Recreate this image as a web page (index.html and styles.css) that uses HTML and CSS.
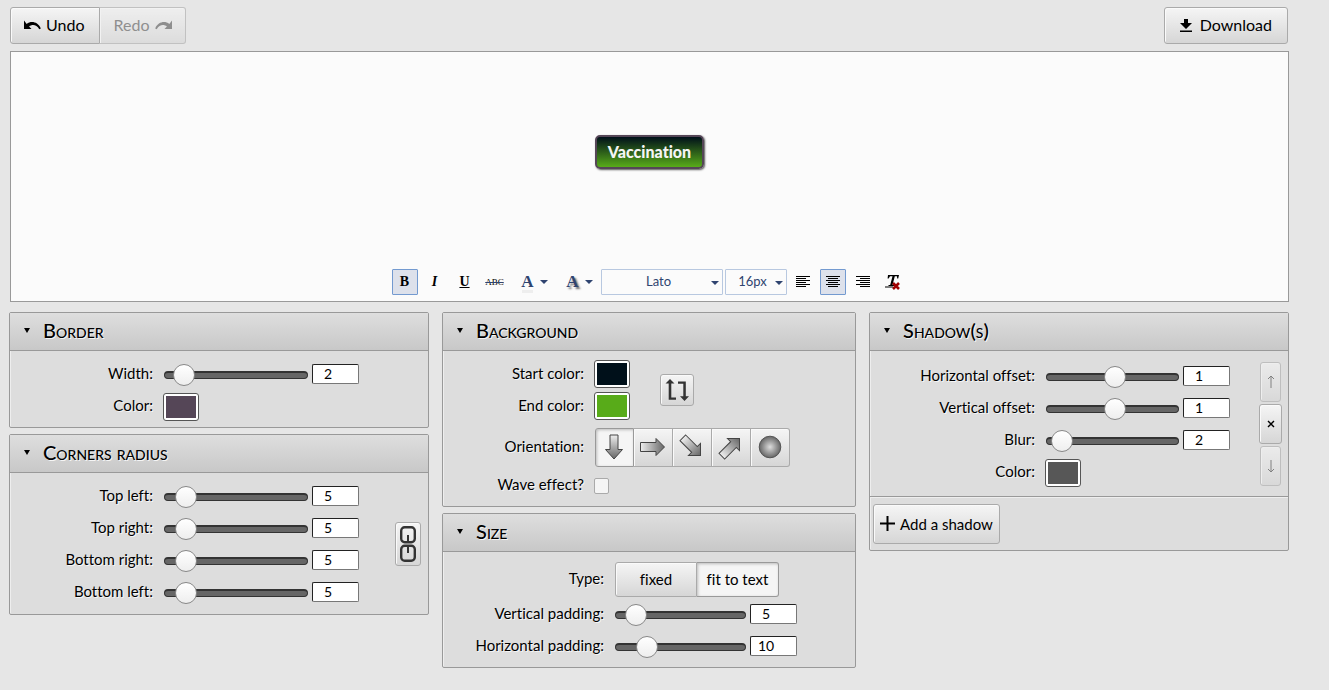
FILE: index.html
```html
<!DOCTYPE html>
<html lang="en">
<head>
<meta charset="utf-8">
<title>Button editor</title>
<link rel="stylesheet" href="styles.css">
</head>
<body>
<header class="topbar">
  <div class="segmented">
    <button class="btn" type="button"><svg width="17" height="12" viewBox="0 0 17 12"><path d="M0 1.500v8.500h7.500L5.100 7.600C8 5.200 12.500 5.400 15.300 10.200l1.500-.8C13.800 2.500 7 1.500 2.700 4.900z" fill="#000"/></svg>Undo</button>
    <button class="btn" type="button" disabled>Redo<svg width="17" height="12" viewBox="0 0 17 12"><path d="M17 1.500v8.500H9.500l2.400-2.400C9 5.200 4.500 5.400 1.700 10.200L.2 9.400C3.200 2.500 10 1.500 14.300 4.900z" fill="#555"/></svg></button>
  </div>
  <button class="btn" type="button"><svg width="12" height="15" viewBox="0 0 12 15"><path d="M4 1h4v4h4L6 11 0 5h4zM0 12.500h12V14H0z" fill="#000"/></svg>Download</button>
</header>

<main>
  <section class="preview">
    <div class="stage"><a class="sample" href="#">Vaccination</a></div>
    <div class="editor">
      <div class="tools">
        <button class="tool tool-on" type="button" aria-label="Bold"><b>B</b></button>
        <button class="tool" type="button" aria-label="Italic"><i>I</i></button>
        <button class="tool" type="button" aria-label="Underline"><u>U</u></button>
        <button class="tool" type="button" aria-label="Strikethrough"><s>ABC</s></button>
      </div>
      <div class="drops">
        <button class="tool drop" type="button" aria-label="Text color"><span class="letter plain">A</span><span class="caret"></span></button>
        <button class="tool drop" type="button" aria-label="Text shadow"><span class="letter glow">A</span><span class="caret"></span></button>
        <div class="pickers">
          <div class="picker font"><select aria-label="Font"><option>Lato</option></select><span class="caret"></span></div>
          <div class="picker size"><select aria-label="Font size"><option>16px</option></select><span class="caret"></span></div>
        </div>
      </div>
      <div class="tools">
        <button class="tool" type="button" aria-label="Align left"><svg width="14" height="12" viewBox="0 0 14 12"><path d="M0 .5h14M0 2.500h10M0 4.500h14M0 6.500h10M0 8.500h14M0 10.500h10" stroke="#000"/></svg></button>
        <button class="tool tool-on" type="button" aria-label="Align center"><svg width="14" height="12" viewBox="0 0 14 12"><path d="M0 .5h14M2 2.500h10M0 4.500h14M2 6.500h10M0 8.500h14M2 10.500h10" stroke="#000"/></svg></button>
        <button class="tool" type="button" aria-label="Align right"><svg width="14" height="12" viewBox="0 0 14 12"><path d="M0 .5h14M4 2.500h10M0 4.500h14M4 6.500h10M0 8.500h14M4 10.500h10" stroke="#000"/></svg></button>
        <button class="tool" type="button" aria-label="Remove formatting"><svg width="15" height="16" viewBox="0 0 15 16"><path d="M3 1h11l-.8 3.500h-1L12 2.300H9.800L7.500 11h1.700v1H3.500v-1h1.700L7.500 2.300H5L3.600 4.500h-1zM0 12.500h8v1H0z" fill="#000"/><path d="M8 9l6 6M14 9l-6 6" stroke="#a00000" stroke-width="2.600"/></svg></button>
      </div>
    </div>
  </section>

  <div class="columns">
    <div class="column">
      <section class="panel">
        <h2>Border</h2>
        <div class="body border-body">
          <div class="row"><label for="bw">Width:</label><input id="bw" type="range" min="0" max="29" value="2"><input class="num" type="text" value="2" aria-label="Border width"></div>
          <div class="row"><label for="bc">Color:</label><input id="bc" type="color" value="#554657"></div>
        </div>
      </section>
      <section class="panel">
        <h2>Corners radius</h2>
        <div class="body corner-body">
          <div class="rows">
            <div class="row"><label for="tl">Top left:</label><input id="tl" type="range" min="0" max="60" value="5"><input class="num" type="text" value="5" aria-label="Top left radius"></div>
            <div class="row"><label for="tr">Top right:</label><input id="tr" type="range" min="0" max="60" value="5"><input class="num" type="text" value="5" aria-label="Top right radius"></div>
            <div class="row"><label for="br">Bottom right:</label><input id="br" type="range" min="0" max="60" value="5"><input class="num" type="text" value="5" aria-label="Bottom right radius"></div>
            <div class="row"><label for="bl">Bottom left:</label><input id="bl" type="range" min="0" max="60" value="5"><input class="num" type="text" value="5" aria-label="Bottom left radius"></div>
          </div>
          <button class="btn link" type="button" aria-label="Link corners"><svg width="16" height="36" viewBox="0 0 16 36"><g fill="none" stroke="#333" stroke-width="2.400"><rect x="1.200" y="1.200" width="13.600" height="15" rx="3.500"/><rect x="1.200" y="19.800" width="13.600" height="15" rx="3.500"/><path d="M8 9v7M8 20v7" stroke-width="2"/></g></svg></button>
        </div>
      </section>
    </div>

    <div class="column">
      <section class="panel">
        <h2>Background</h2>
        <div class="body bg-body">
          <div class="swap-group">
            <div>
              <div class="row"><label for="sc">Start color:</label><input id="sc" type="color" value="#00101a"></div>
              <div class="row"><label for="ec">End color:</label><input id="ec" type="color" value="#58ab19"></div>
            </div>
            <button class="btn swap" type="button" aria-label="Swap colors"><svg width="24" height="24" viewBox="0 0 24 24"><path d="M5 1l4.500 4.500H6.300V19.500H11v2.300H3.700V5.500H.5zM13 3.500h7.800v14.700H24L19.500 23 15 18.200h3.300V5.800H13z" fill="#333"/></svg></button>
          </div>
          <div class="row tall">
            <span class="label">Orientation:</span>
            <div class="segmented orient">
              <button class="btn btn-on" type="button" aria-label="Top to bottom"><svg width="28" height="28" viewBox="0 0 28 28"><defs><linearGradient id="g"><stop offset="0" stop-color="#eee"/><stop offset="1" stop-color="#666"/></linearGradient><radialGradient id="r"><stop offset="0" stop-color="#ddd"/><stop offset="1" stop-color="#666"/></radialGradient></defs><path transform="rotate(90 14 14)" d="M2 10h14.500V5.500L26 14l-9.500 8.500V18H2z" fill="url(#g)" stroke="#444"/></svg></button>
              <button class="btn" type="button" aria-label="Left to right"><svg width="28" height="28" viewBox="0 0 28 28"><path d="M1.500 9.500h15.500v-4L25.500 14l-8.500 8.500v-4H1.500z" fill="url(#g)" stroke="#444"/></svg></button>
              <button class="btn" type="button" aria-label="Diagonal down"><svg width="28" height="28" viewBox="0 0 28 28"><path transform="rotate(45 14 14)" d="M1 10h16.500V5.500L26 14l-8.500 8.500V18H1z" fill="url(#g)" stroke="#444"/></svg></button>
              <button class="btn" type="button" aria-label="Diagonal up"><svg width="28" height="28" viewBox="0 0 28 28"><path transform="rotate(-45 14 14)" d="M1 10h16.500V5.500L26 14l-8.500 8.500V18H1z" fill="url(#g)" stroke="#444"/></svg></button>
              <button class="btn" type="button" aria-label="Radial"><svg width="28" height="28" viewBox="0 0 28 28"><circle cx="14" cy="14" r="10.800" fill="url(#r)" stroke="#555"/></svg></button>
            </div>
          </div>
          <div class="row"><label for="wave">Wave effect?</label><input id="wave" type="checkbox"></div>
        </div>
      </section>
      <section class="panel">
        <h2>Size</h2>
        <div class="body size-body">
          <div class="row type-row">
            <span class="label">Type:</span>
            <div class="segmented types">
              <button class="btn" type="button">fixed</button>
              <button class="btn btn-on" type="button">fit to text</button>
            </div>
          </div>
          <div class="row"><label for="vp">Vertical padding:</label><input id="vp" type="range" min="0" max="57" value="5"><input class="num" type="text" value="5" aria-label="Vertical padding value"></div>
          <div class="row"><label for="hp">Horizontal padding:</label><input id="hp" type="range" min="0" max="54" value="10"><input class="num" type="text" value="10" aria-label="Horizontal padding value"></div>
        </div>
      </section>
    </div>

    <div class="column">
      <section class="panel">
        <h2>Shadow(s)</h2>
        <div class="body shadow-body">
          <div class="rows">
            <div class="row"><label for="ho">Horizontal offset:</label><input id="ho" type="range" min="-20" max="20" value="1"><input class="num" type="text" value="1" aria-label="Horizontal offset value"></div>
            <div class="row"><label for="vo">Vertical offset:</label><input id="vo" type="range" min="-20" max="20" value="1"><input class="num" type="text" value="1" aria-label="Vertical offset value"></div>
            <div class="row"><label for="sb">Blur:</label><input id="sb" type="range" min="0" max="60" value="2"><input class="num" type="text" value="2" aria-label="Blur value"></div>
            <div class="row"><label for="shc">Color:</label><input id="shc" type="color" value="#575757"></div>
          </div>
          <div class="order">
            <button class="btn" type="button" aria-label="Move up" disabled><svg width="8" height="14" viewBox="0 0 8 14"><path d="M4 1v12M1 4l3-3 3 3" fill="none" stroke="#444"/></svg></button>
            <button class="btn" type="button" aria-label="Remove shadow"><svg width="8" height="8" viewBox="0 0 8 8"><path d="M1 1l6 6M7 1L1 7" stroke="#000" stroke-width="1.400"/></svg></button>
            <button class="btn" type="button" aria-label="Move down" disabled><svg width="8" height="14" viewBox="0 0 8 14"><path d="M4 1v12M1 10l3 3 3-3" fill="none" stroke="#444"/></svg></button>
          </div>
        </div>
        <div class="add">
          <button class="btn" type="button"><svg width="15" height="15" viewBox="0 0 15 15"><path d="M7.500 0v15M0 7.500h15" stroke="#000" stroke-width="2"/></svg>Add a shadow</button>
        </div>
      </section>
    </div>
  </div>
</main>
</body>
</html>
```
FILE: styles.css
```css
* { box-sizing: border-box; }

body {
  margin: 0;
  padding: 7px 40px 20px 9px;
  background: #e6e6e6;
  color: #000;
  font: 15px/20px Lato, sans-serif;
  font-variant-ligatures: none;
}

button, input, select { margin: 0; font: inherit; color: inherit; }
button { font-variant-ligatures: none; }
svg { display: block; flex: none; }

.btn {
  display: flex;
  align-items: center;
  justify-content: center;
  gap: 5px;
  padding: 0 14px;
  border: 1px solid #aaa;
  border-radius: 3px;
  background: linear-gradient(#f5f5f5, #d6d6d6);
  box-shadow: inset 1px 1px 0 #fafafa;
}
.btn:disabled { opacity: .6; color: #555; }
.btn-on {
  border-color: #999;
  background: #f5f5f5;
  box-shadow: inset 1px 1px 3px #bbb;
}

.segmented { display: flex; }
.segmented .btn { border-radius: 0; }
.segmented .btn + .btn { border-left-width: 0; }
.segmented .btn:first-child { border-radius: 3px 0 0 3px; }
.segmented .btn:last-child { border-radius: 0 3px 3px 0; }

.topbar {
  display: flex;
  justify-content: space-between;
  padding: 0 1px;
}
.topbar .btn { gap: 8px; height: 37px; padding: 0 15px 1px; font-size: 16px; }
.topbar .segmented .btn { gap: 5px; padding: 0 14px 1px 13px; }
.topbar .segmented .btn:last-child { gap: 6px; padding: 0 13px 1px 14px; }

.preview {
  display: flex;
  flex-direction: column;
  margin: 7px 0 10px 1px;
  border: 1px solid #999;
  background: #fbfbfb;
}
.stage {
  display: flex;
  justify-content: center;
  padding: 83px 0 99px;
}
.sample {
  padding: 5px 11px;
  border: 2px solid #554657;
  border-radius: 5px;
  background: linear-gradient(#00101a, #58ab19);
  box-shadow: 1px 1px 2px #575757;
  color: #f5f5f5;
  font-size: 16px;
  font-weight: 900;
  line-height: 20px;
  text-decoration: none;
}

.editor {
  display: flex;
  justify-content: center;
  gap: 3px;
  padding: 1px 2px 6px 0;
}
.tools { display: flex; gap: 4px; }
.drops, .pickers { display: flex; }
.pickers { gap: 2px; }
.tool {
  display: flex;
  align-items: center;
  justify-content: center;
  width: 26px;
  height: 26px;
  padding: 0;
  border: 1px solid transparent;
  border-radius: 1px;
  background: none;
  font: 14px/16px "Liberation Serif", serif;
}
.tool b { font-weight: 700; }
.tool i, .tool u { font-weight: 700; }
.tool s { font-size: 9px; text-decoration-color: #2f4470; }
.tool-on { border-color: #739ad0; background: #dde1eb; }
.drop { width: 45px; gap: 6px; padding-left: 3px; }
.letter { color: #2f4470; font-size: 17px; font-weight: 700; }
.plain { box-shadow: 0 4px 0 -1px #eee; }
.glow { text-shadow: 2px 2px 2px #666; }
.caret {
  border: 4px solid transparent;
  border-top-color: #2f4470;
  border-bottom: 0;
}
.picker { position: relative; height: 26px; }
.picker select {
  width: 100%;
  height: 100%;
  padding: 0 12px 2px 6px;
  appearance: none;
  border: 1px solid #b8c8e0;
  border-radius: 1px;
  background: #fbfbfb;
  color: #2f4470;
  font-size: 13px;
  text-align: center;
  text-align-last: center;
}
.picker .caret {
  position: absolute;
  top: 12px;
  right: 4px;
  pointer-events: none;
}
.font { width: 122px; }
.size { width: 62px; }

.columns {
  display: grid;
  grid-template-columns: 420fr 414fr 420fr;
  align-items: start;
  gap: 13px;
}
.column { display: grid; gap: 6px; }
.panel {
  border: 1px solid #999;
  border-radius: 2px;
  background: #ddd;
  box-shadow: inset 1px 1px 0 #eee;
}
.panel h2 {
  display: flex;
  align-items: center;
  gap: 13px;
  height: 38px;
  margin: 0;
  padding: 0 0 3px 14px;
  border-bottom: 1px solid #999;
  background: linear-gradient(#dedede, #c8c8c8);
  font-size: 20px;
  font-weight: 500;
  font-variant-caps: small-caps;
  text-shadow: 1px 1px 0 #f5f5f5;
}
.panel h2::before {
  content: "";
  border: 3px solid transparent;
  border-top: 5px solid #000;
  border-bottom: 0;
}

.row {
  display: grid;
  grid-template-columns: 143px 1fr 47px;
  align-items: center;
  height: 32px;
}
.row label, .label {
  padding-bottom: 3px;
  text-align: right;
  text-shadow: 1px 1px 0 #f5f5f5;
}
.row label { white-space: nowrap; }

.num {
  width: 47px;
  height: 20px;
  padding: 0 15px 1px 0;
  border: 1px solid #777;
  border-top-color: #222;
  border-left-color: #222;
  border-radius: 2px;
  background: #fff;
  font-size: 14px;
  text-align: center;
}

input[type="range"] {
  min-width: 0;
  height: 22px;
  margin: 2px 4px 0 11px;
  appearance: none;
  background: none;
}
input[type="range"]::-webkit-slider-runnable-track {
  height: 8px;
  border: 1px solid #333;
  border-top-width: 2px;
  border-radius: 4px;
  background: #666;
}
input[type="range"]::-webkit-slider-thumb {
  width: 22px;
  height: 22px;
  margin-top: -9px;
  appearance: none;
  border: 1px solid #888;
  border-radius: 50%;
  background: linear-gradient(#fff, #eee);
}

input[type="color"] {
  width: 36px;
  height: 28px;
  margin: 2px 0 0 10px;
  padding: 2px;
  appearance: none;
  border: 1px solid #555;
  border-radius: 3px;
  background: #fff;
}
.swap-group input[type="color"] { margin-top: 0; }
input[type="color"]::-webkit-color-swatch-wrapper { padding: 0; }
input[type="color"]::-webkit-color-swatch { border: 0; border-radius: 0; }

input[type="checkbox"] {
  width: 15px;
  height: 16px;
  margin: 2px 0 0 10px;
  appearance: none;
  border: 1px solid #aaa;
  border-radius: 2px;
  background: #f5f5f5;
}

.border-body { padding: 7px 69px 5px 0; }
.corner-body {
  display: flex;
  align-items: center;
  gap: 36px;
  padding: 7px 7px 6px 0;
}
.rows { flex: 1; }
.link { width: 26px; height: 44px; padding: 0; }

.bg-body { padding: 7px 0 5px; }
.bg-body .row { grid-template-columns: 141px 1fr; }
.swap-group { display: flex; align-items: center; gap: 30px; }
.swap { width: 34px; height: 32px; padding: 0; }
.bg-body .tall { height: 42px; margin: 4px 0 1px; }
.orient { margin-left: 11px; }
.orient .btn { width: 39px; height: 39px; padding: 0 1px 0 0; }

.size-body { padding: 9px 58px 5px 0; }
.size-body .row { grid-template-columns: 161px 1fr 47px; }
.size-body .type-row { grid-template-columns: 161px 1fr; height: 37px; }
.types { margin-left: 11px; }
.types .btn { flex: 0 0 82px; height: 35px; padding: 0 0 2px; white-space: nowrap; }

.shadow-body {
  display: flex;
  align-items: center;
  gap: 29px;
  padding: 9px 6px 8px 0;
}
.shadow-body .row { grid-template-columns: 165px 1fr 47px; }
.order { display: grid; justify-items: center; gap: 2px; }
.order .btn { width: 23px; height: 40px; padding: 0; }
.order .btn:disabled { width: 21px; }
.add {
  padding: 7px 3px 6px;
  border-top: 1px solid #999;
  box-shadow: inset 0 1px 0 #eee;
}
.add .btn { height: 40px; padding: 0 6px 1px; }
```
